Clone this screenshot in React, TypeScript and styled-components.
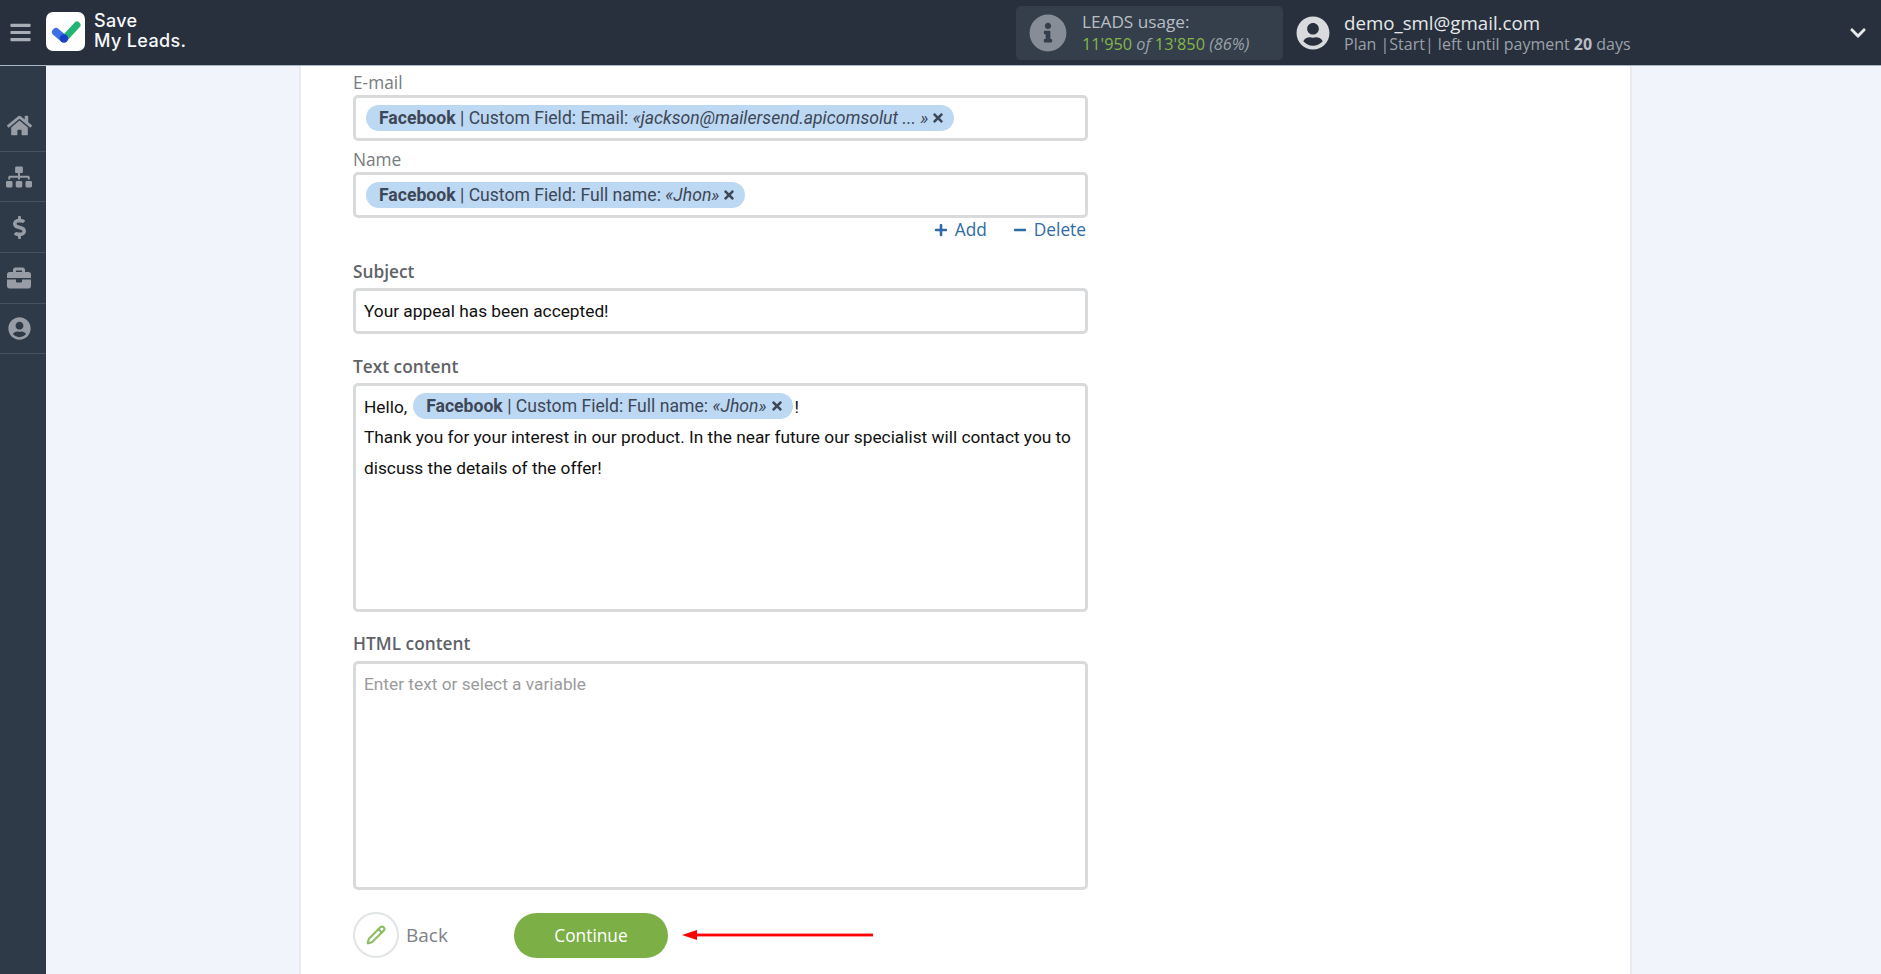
import React from "react";
import styled, { createGlobalStyle } from "styled-components";
import {
  FaBars, FaBriefcase, FaChevronDown, FaDollarSign, FaHome, FaInfoCircle,
  FaMinus, FaPlus, FaSitemap, FaTimes, FaUserCircle,
} from "react-icons/fa";
import { Pencil } from "lucide-react";

const Global = createGlobalStyle`
  html, body { margin: 0; padding: 0; height: 974px; overflow: hidden; background: #f2f4fb; }
  * { box-sizing: border-box; }
  body { font-family: "Open Sans", "Liberation Sans", sans-serif; }
`;

const Page = styled.div`
  width: 1881px;
  height: 974px;
  display: flex;
  flex-direction: column;
  overflow: hidden;
`;

const Header = styled.header`
  height: 66px;
  flex: none;
  display: flex;
  align-items: center;
  background: #28303d;
  border-bottom: 1px solid #a9b6c4;
  color: #fff;
`;

const Burger = styled.div`
  width: 46px;
  flex: none;
  display: flex;
  justify-content: center;
  padding-right: 6px;
  color: #a9aeb6;
  font-size: 23px;
  line-height: 0;
`;

const LogoMark = styled.svg`
  width: 39px;
  height: 39px;
  flex: none;
  margin-top: -3px;
`;

const LogoText = styled.div`
  margin-left: 9px;
  margin-top: -3px;
  font-family: "Inter", sans-serif;
  font-weight: 500;
  font-size: 18px;
  line-height: 20px;
  letter-spacing: 0.35px;
  color: #f7f8f9;
`;

const Spacer = styled.div`
  flex: 1;
`;

const Usage = styled.div`
  width: 267px;
  height: 54px;
  flex: none;
  display: flex;
  align-items: center;
  background: #343f4b;
  border-radius: 5px;
  padding-left: 13px;
  margin-right: 13px;
`;

const UsageIcon = styled.div`
  color: #868d96;
  font-size: 38px;
  line-height: 0;
  margin-right: 15px;
`;

const UsageText = styled.div`
  font-size: 16.3px;
  line-height: 22px;
  color: #b9bec4;
`;

const UsageTitle = styled.div`
  font-size: 17.2px;
`;

const Green = styled.span`
  color: #84b64a;
`;

const Muted = styled.i`
  color: #9aa1a9;
`;

const UserIcon = styled.div`
  color: #d8dadd;
  font-size: 34px;
  line-height: 0;
  margin-right: 14px;
`;

const UserText = styled.div`
  width: 505px;
  flex: none;
`;

const UserMail = styled.div`
  font-size: 18.7px;
  line-height: 22px;
  color: #e6e8ea;
`;

const UserPlan = styled.div`
  font-size: 16px;
  line-height: 20px;
  color: #9aa1a9;
  b { color: #b9bec4; font-weight: 700; }
`;

const Chevron = styled.div`
  color: #e6e8ea;
  font-size: 18px;
  line-height: 0;
  margin-right: 14px;
`;

const Body = styled.div`
  flex: 1;
  display: flex;
  min-height: 0;
`;

const Side = styled.nav`
  width: 46px;
  flex: none;
  background: #2f3a49;
  padding-top: 35px;
`;

const SideItem = styled.div<{ $size: number }>`
  height: 50.7px;
  display: flex;
  align-items: center;
  justify-content: center;
  padding-right: 8px;
  border-bottom: 1px solid #465261;
  color: #989da5;
  font-size: ${(p) => p.$size}px;
  line-height: 0;
`;

const Main = styled.main`
  flex: 1;
  display: flex;
  padding-left: 253px;
`;

const Card = styled.section`
  width: 1333px;
  flex: none;
  background: #fff;
  border-left: 2px solid #e9ebf0;
  border-right: 2px solid #e9ebf0;
  padding: 5px 0 0 52px;
`;

const Form = styled.div`
  width: 735px;
`;

const Label = styled.div<{ $top?: number; $gap?: number; $strong?: boolean }>`
  height: 22px;
  margin-top: ${(p) => p.$top ?? 0}px;
  margin-bottom: ${(p) => p.$gap ?? 2}px;
  font-size: 17.3px;
  line-height: 24px;
  font-weight: ${(p) => (p.$strong ? 600 : 400)};
  color: ${(p) => (p.$strong ? "#5f6368" : "#777b80")};
`;

const Box = styled.div`
  height: 46px;
  border: 3px solid #d8dadc;
  border-radius: 5px;
  background: #fff;
  padding: 0 8px;
  display: flex;
  align-items: center;
  font-family: "Roboto", sans-serif;
  font-size: 17.3px;
  color: #111;
`;

const TextArea = styled.div<{ $muted?: boolean }>`
  height: 229px;
  border: 3px solid #d8dadc;
  border-radius: 5px;
  background: #fff;
  padding: ${(p) => (p.$muted ? 5 : 6)}px 7px 0 8px;
  font-family: "Roboto", sans-serif;
  font-size: 17.3px;
  line-height: 30.6px;
  color: ${(p) => (p.$muted ? "#9b9b9b" : "#111")};
`;

const FirstLine = styled.div`
  height: 30px;
`;

const Chip = styled.span<{ $inline?: boolean }>`
  display: inline-flex;
  align-items: center;
  height: 26px;
  padding: 0 9px 0 13px;
  margin-left: ${(p) => (p.$inline ? 6 : 2)}px;
  margin-right: ${(p) => (p.$inline ? 2 : 0)}px;
  border-radius: 13px;
  background: #bdd8f2;
  color: #3d4757;
  font-family: "Roboto", sans-serif;
  font-size: 17.6px;
  line-height: 26px;
  white-space: pre;
  vertical-align: 1px;
  b { font-weight: 700; }
  i { font-style: italic; }
  svg { margin-left: 3px; font-size: 14px; }
`;

const Actions = styled.div`
  height: 22px;
  margin-top: 1px;
  padding-right: 2px;
  display: flex;
  justify-content: flex-end;
  gap: 26px;
`;

const ActionLink = styled.span`
  display: inline-flex;
  align-items: center;
  gap: 7px;
  font-size: 17.3px;
  line-height: 22px;
  color: #2f6ba6;
  svg { font-size: 14px; }
`;

const Buttons = styled.div`
  margin-top: 22px;
  display: flex;
  align-items: center;
`;

const BackCircle = styled.div`
  width: 46px;
  height: 46px;
  flex: none;
  border: 2px solid #e2e5e6;
  border-radius: 50%;
  display: flex;
  align-items: center;
  justify-content: center;
  color: #8dbd62;
`;

const BackText = styled.span`
  width: 108px;
  flex: none;
  margin-left: 7px;
  font-size: 19px;
  color: #7e8286;
`;

const Continue = styled.div`
  width: 154px;
  height: 45px;
  flex: none;
  border-radius: 23px;
  background: #7daf47;
  color: #fff;
  font-size: 17.3px;
  display: flex;
  align-items: center;
  justify-content: center;
`;

const Arrow = styled.svg`
  width: 192px;
  height: 12px;
  flex: none;
  margin-left: 14px;
`;

export default function App() {
  return (
    <Page>
      <Global />
      <Header>
        <Burger><FaBars /></Burger>
        <LogoMark viewBox="0 0 39 39">
          <rect width="39" height="39" rx="7" fill="#fff" />
          <path d="M19 26 L31 13" stroke="#22b573" strokeWidth="7" strokeLinecap="round" />
          <path d="M10 20 L17 26" stroke="#3f6fe8" strokeWidth="8" strokeLinecap="round" />
          <circle cx="18" cy="26.5" r="4.2" fill="#1c3fc4" />
        </LogoMark>
        <LogoText>Save<br />My Leads.</LogoText>
        <Spacer />
        <Usage>
          <UsageIcon><FaInfoCircle /></UsageIcon>
          <UsageText>
            <UsageTitle>LEADS usage:</UsageTitle>
            <Green>11'950</Green> <Muted>of</Muted> <Green>13'850</Green> <Muted>(86%)</Muted>
          </UsageText>
        </Usage>
        <UserIcon><FaUserCircle /></UserIcon>
        <UserText>
          <UserMail>demo_sml@gmail.com</UserMail>
          <UserPlan>Plan |Start| left until payment <b>20</b> days</UserPlan>
        </UserText>
        <Chevron><FaChevronDown /></Chevron>
      </Header>
      <Body>
        <Side>
          <SideItem $size={25}><FaHome /></SideItem>
          <SideItem $size={26}><FaSitemap /></SideItem>
          <SideItem $size={23}><FaDollarSign /></SideItem>
          <SideItem $size={24}><FaBriefcase /></SideItem>
          <SideItem $size={23}><FaUserCircle /></SideItem>
        </Side>
        <Main>
          <Card>
            <Form>
              <Label>E-mail</Label>
              <Box>
                <Chip><b>Facebook</b> | Custom Field: Email: <i>«jackson@mailersend.apicomsolut ... »</i><FaTimes /></Chip>
              </Box>
              <Label $top={7}>Name</Label>
              <Box>
                <Chip><b>Facebook</b> | Custom Field: Full name: <i>«Jhon»</i><FaTimes /></Chip>
              </Box>
              <Actions>
                <ActionLink><FaPlus />Add</ActionLink>
                <ActionLink><FaMinus />Delete</ActionLink>
              </Actions>
              <Label $top={19} $gap={6} $strong>Subject</Label>
              <Box>Your appeal has been accepted!</Box>
              <Label $top={21} $gap={6} $strong>Text content</Label>
              <TextArea>
                <FirstLine>
                  Hello,
                  <Chip $inline><b>Facebook</b> | Custom Field: Full name: <i>«Jhon»</i><FaTimes /></Chip>
                  !
                </FirstLine>
                Thank you for your interest in our product. In the near future our specialist will contact you to discuss the details of the offer!
              </TextArea>
              <Label $top={20} $gap={7} $strong>HTML content</Label>
              <TextArea $muted>Enter text or select a variable</TextArea>
              <Buttons>
                <BackCircle><Pencil size={20} strokeWidth={2.5} /></BackCircle>
                <BackText>Back</BackText>
                <Continue>Continue</Continue>
                <Arrow viewBox="0 0 192 12">
                  <rect x="12" y="4.6" width="179" height="2.8" fill="#f00" />
                  <polygon points="0,6 15,1 15,11" fill="#f00" />
                </Arrow>
              </Buttons>
            </Form>
          </Card>
        </Main>
      </Body>
    </Page>
  );
}
